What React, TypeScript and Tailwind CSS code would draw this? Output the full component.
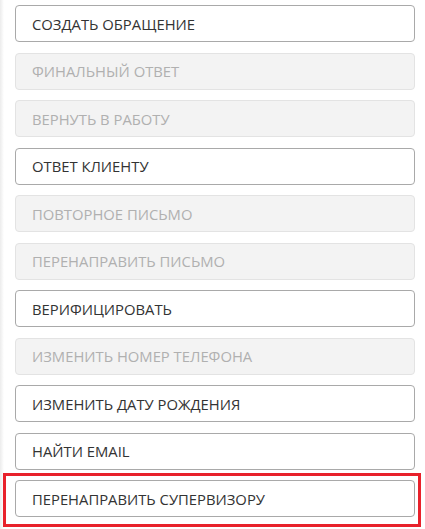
import React from 'react';

const actions: { label: string; disabled?: boolean; highlighted?: boolean }[] = [
  { label: 'Создать обращение' },
  { label: 'Финальный ответ', disabled: true },
  { label: 'Вернуть в работу', disabled: true },
  { label: 'Ответ клиенту' },
  { label: 'Повторное письмо', disabled: true },
  { label: 'Перенаправить письмо', disabled: true },
  { label: 'Верифицировать' },
  { label: 'Изменить номер телефона', disabled: true },
  { label: 'Изменить дату рождения' },
  { label: 'Найти email' },
  { label: 'Перенаправить супервизору', highlighted: true },
];

const ActionButton = ({ label, disabled }: { label: string; disabled?: boolean }) => (
  <button
    disabled={disabled}
    className={
      disabled
        ? 'w-[400px] h-[37px] flex items-center pl-[16px] pt-[1px] rounded-[4px] border border-[#e3e3e3] bg-[#f3f3f3] text-[#b0b0b0] text-[14.8px] uppercase text-left'
        : 'w-[400px] h-[37px] flex items-center pl-[16px] pt-[1px] rounded-[4px] border border-[#a9a9a9] bg-white text-[#333333] text-[14.8px] uppercase text-left'
    }
  >
    {label}
  </button>
);

export default function App() {
  return (
    <div className="relative w-[425px] h-[529px] bg-white overflow-hidden" style={{ fontFamily: '"Open Sans", "Liberation Sans", sans-serif' }}>
      <div className="absolute left-0 top-0 bottom-0 w-[4px] bg-gradient-to-r from-[#ececec] to-white" />
      <div className="flex flex-col gap-[10.5px] pl-[15px] pt-[5px]">
        {actions.map((a) =>
          a.highlighted ? (
            <div key={a.label} className="relative">
              <ActionButton label={a.label} />
              <div className="absolute -left-[12px] -top-[7px] w-[418px] h-[54px] border-[3px] border-[#e8212b] pointer-events-none" />
            </div>
          ) : (
            <ActionButton key={a.label} label={a.label} disabled={a.disabled} />
          )
        )}
      </div>
    </div>
  );
}
